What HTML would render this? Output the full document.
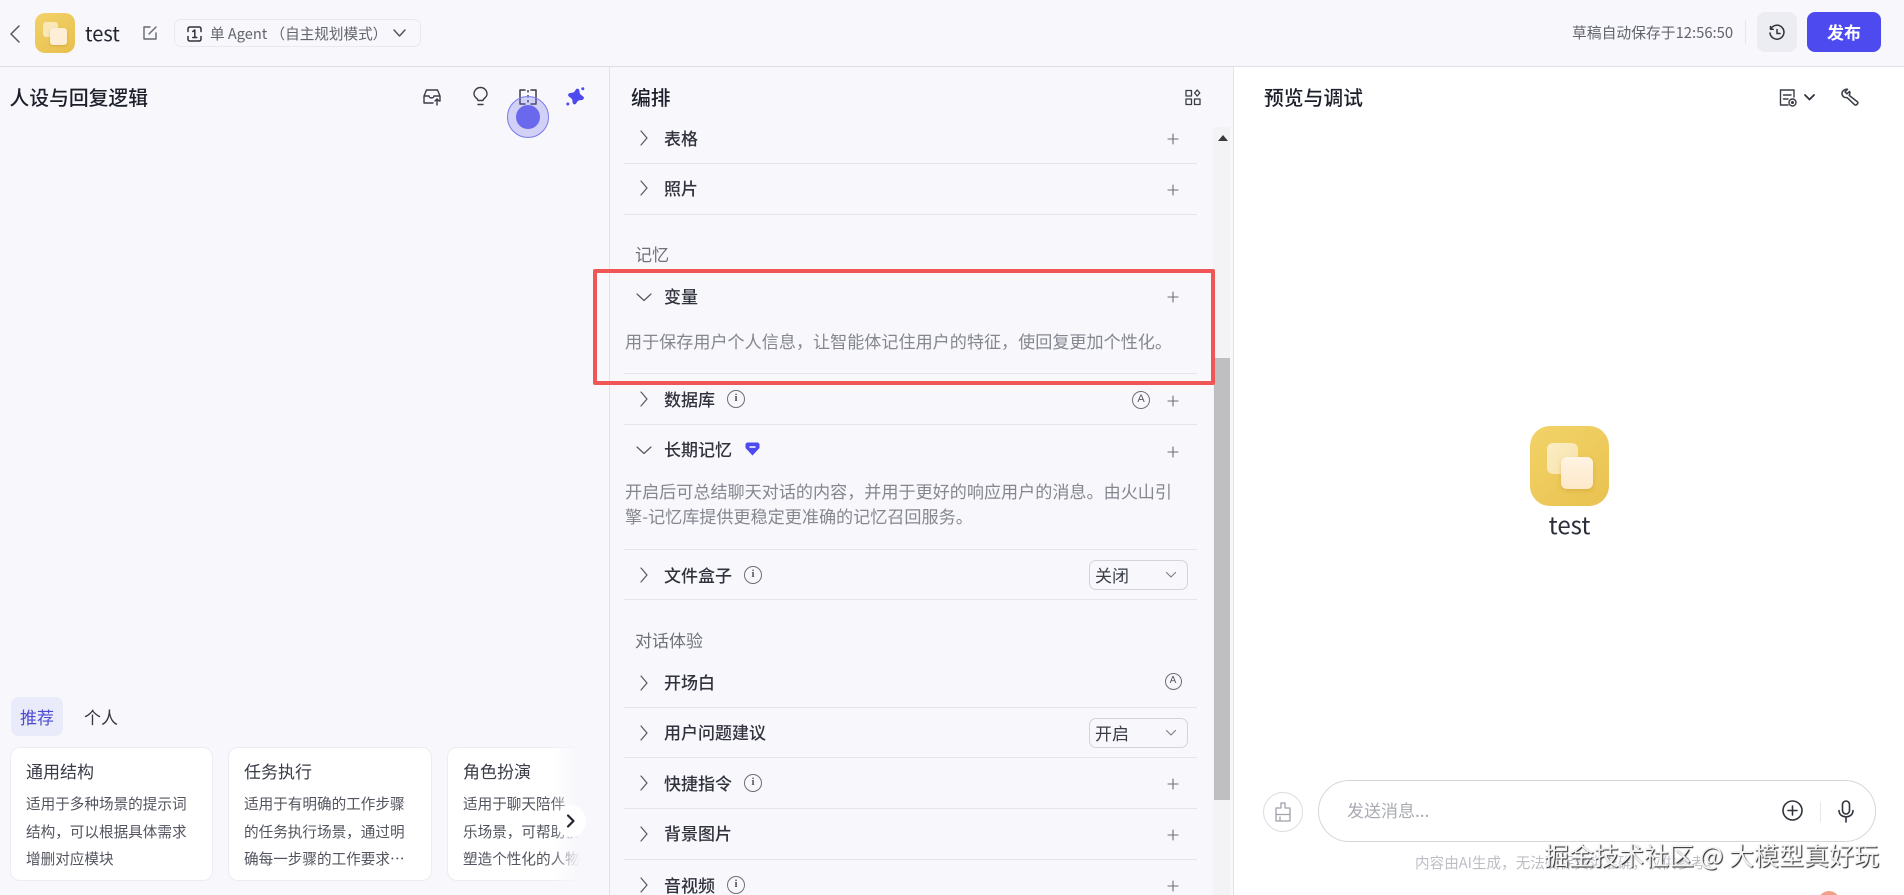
<!DOCTYPE html>
<html lang="zh-CN"><head><meta charset="utf-8"><title>test</title>
<style>
html,body{margin:0;padding:0;width:1904px;height:895px;overflow:hidden;background:#f7f7fc}
*{box-sizing:border-box}
body{position:relative;font-family:"Noto Sans CJK SC","Liberation Sans",sans-serif;color:#1f2333}
.a{position:absolute;white-space:nowrap}
svg{position:absolute;overflow:visible;fill:none;stroke:#3a3c46;stroke-width:1.5;stroke-linecap:round;stroke-linejoin:round}
.l{position:absolute;left:624px;width:573px;height:1px;background:#e4e5ea}
.t{position:absolute;left:664px;height:24px;line-height:24px;font-size:17px;color:#30323c;font-weight:500;white-space:nowrap}
.h{position:absolute;height:28px;line-height:28px;font-size:19.8px;font-weight:500;color:#1c1f2a;white-space:nowrap}
.d{position:absolute;left:625px;height:25px;line-height:25px;font-size:17.1px;color:#85878f;white-space:nowrap}
.s{position:absolute;left:635px;height:24px;line-height:24px;font-size:17px;color:#6f7179;white-space:nowrap}
.sel{position:absolute;left:1089px;width:99px;height:30px;border:1px solid #d3d4da;border-radius:7px;font-size:17px;line-height:28px;padding-left:5px;color:#3a3c46}
.card{position:absolute;top:747px;height:134px;background:#fff;border:1px solid #ececf2;border-radius:10px;overflow:hidden}
.card b{position:absolute;left:15px;top:10.500px;font-size:17px;line-height:24px;font-weight:400;color:#3a3c46;white-space:nowrap}
.card p{position:absolute;left:15px;top:42px;margin:0;font-size:14.6px;line-height:27.5px;color:#52545e;white-space:nowrap}
.i{position:absolute;width:18px;height:18px;border:1.300px solid #6d6f77;border-radius:50%;font:700 11px/15px 'Liberation Serif',serif;text-align:center;color:#55575f}
</style></head><body>

<!-- header -->
<div class="a" style="left:0;top:66px;width:1904px;height:1px;background:#dfe0e6"></div>
<svg style="left:9px;top:24px" width="12" height="20" viewBox="0 0 12 20"><path d="M10 2 L2 10 L10 18" stroke="#55575f"/></svg>
<div class="a" style="left:35px;top:13px;width:40px;height:40px;border-radius:10px;background:linear-gradient(145deg,#f2d26a,#e8bf4d)">
  <div class="a" style="left:8px;top:9px;width:15px;height:15px;border-radius:3px;background:#f9e7b8"></div>
  <div class="a" style="left:15px;top:15px;width:17px;height:17px;border-radius:3px;background:#fdeed5;box-shadow:0 1px 2px rgba(180,130,30,.4)"></div>
</div>
<div class="a" style="left:85px;top:19px;font-size:20px;line-height:28px;color:#22252f">test</div>
<svg style="left:142px;top:25px" width="16" height="16" viewBox="0 0 16 16"><path d="M8 2 H2 V14 H14 V8" stroke="#66686f" stroke-width="1.4"/><path d="M7 9 L14 2" stroke="#66686f" stroke-width="1.4"/></svg>
<div class="a" style="left:174px;top:19px;width:247px;height:28px;border:1px solid #e9e9f0;border-radius:7px"></div>
<svg style="left:187px;top:26px" width="15" height="16" viewBox="0 0 15 16"><path d="M1 5.500 V3 Q1 1 3 1 H12 Q14 1 14 3 V5.500 M1 10.500 V13 Q1 15 3 15 H12 Q14 15 14 13 V10.500" stroke="#30323c"/><path d="M5.800 5.500 L7.800 4 V11.500 M5.800 11.500 H9.800" stroke="#30323c"/></svg>
<div class="a" style="left:210px;top:23px;font-size:14.6px;line-height:22px;color:#62646d">单 Agent （自主规划模式）</div>
<svg style="left:393px;top:29px" width="13" height="8" viewBox="0 0 13 8"><path d="M1 1 L6.500 7 L12 1" stroke="#55575f"/></svg>

<div class="a" style="left:1572px;top:21px;font-size:14.8px;line-height:24px;color:#62646d">草稿自动保存于12:56:50</div>
<div class="a" style="left:1745px;top:20px;width:1px;height:24px;background:#e6e7ec"></div>
<div class="a" style="left:1757px;top:12px;width:40px;height:40px;border-radius:8px;background:#ecedf2"></div>
<svg style="left:1769px;top:25px" width="16" height="16" viewBox="0 0 16 16"><path d="M2 3.500 A7 7 0 1 1 1 8" stroke="#30323c"/><path d="M1.500 1.500 V4.200 H4.200 M8 4.500 V8.500 H11" stroke="#30323c"/></svg>
<div class="a" style="left:1807px;top:12px;width:74px;height:40px;border-radius:8px;background:#4d4bf0;color:#fff;font-size:17px;font-weight:700;line-height:40px;text-align:center">发布</div>

<!-- left pane -->
<div class="a" style="left:609px;top:67px;width:1px;height:828px;background:#e2e3e9"></div>
<div class="h" style="left:9.500px;top:83px">人设与回复逻辑</div>

<svg style="left:423px;top:88px" width="19" height="18" viewBox="0 0 19 18"><path d="M1 8 L3.500 2 H14.500 L17 8 V13 M1 8 V15 H10 M1 8 H6 C6 10.500 11 10.500 11 8 H17 M14 17 V11 M12 13 L14 11 L16 13" stroke="#3a3c46" stroke-width="1.400"/></svg>
<svg style="left:473px;top:87px" width="15" height="20" viewBox="0 0 15 20"><path d="M5 13.500 C5 11.500 1 10.500 1 7 A6.500 6.500 0 0 1 14 7 C14 10.500 10 11.500 10 13.500 Z M5 17.500 H10" stroke="#3a3c46" stroke-width="1.400"/></svg>
<svg style="left:519px;top:89px" width="18" height="16" viewBox="0 0 18 16"><path d="M6 1 H1 V15 H6 M12 1 H17 V15 H12" stroke="#3a3c46" stroke-width="1.500"/><path d="M9 1 V15" stroke="#3a3c46" stroke-width="1.400" stroke-dasharray="2.500 2.500" stroke-linecap="butt"/></svg>
<svg style="left:566px;top:87px" width="19" height="19" viewBox="0 0 19 19"><path d="M10 3.500 C10.800 7 12 8.200 16 9.500 C12 10.800 10.800 12 10 15.500 C9.200 12 8 10.800 4 9.500 C8 8.200 9.200 7 10 3.500Z" transform="rotate(14 10 9.500)" fill="#4d4bf0" stroke="#4d4bf0" stroke-width="4"/><circle cx="16.800" cy="1.800" r="1.500" fill="#4d4bf0" stroke="none"/><circle cx="1.800" cy="17" r="1.500" fill="#4d4bf0" stroke="none"/></svg>

<div class="a" style="left:507px;top:96px;width:42px;height:42px;border-radius:50%;background:rgba(113,110,236,.28);border:1.500px solid #7d79ee"></div>
<div class="a" style="left:516px;top:105px;width:24px;height:24px;border-radius:50%;background:#6a68ec"></div>

<div class="a" style="left:11px;top:697px;width:52px;height:39px;border-radius:8px;background:#e9eafa"></div>
<div class="a" style="left:20px;top:705px;font-size:17px;line-height:24px;color:#4d4bcf">推荐</div>
<div class="a" style="left:84px;top:705px;font-size:17px;line-height:24px;color:#33353f">个人</div>

<div class="card" style="left:10px;width:203px"><b>通用结构</b><p>适用于多种场景的提示词<br>结构，可以根据具体需求<br>增删对应模块</p></div>
<div class="card" style="left:228px;width:204px"><b>任务执行</b><p>适用于有明确的工作步骤<br>的任务执行场景，通过明<br>确每一步骤的工作要求…</p></div>
<div class="card" style="left:447px;width:133px;border-right:none;border-radius:10px 0 0 10px"><b>角色扮演</b><p>适用于聊天陪伴、互动娱<br>乐场景，可帮助模型轻松<br>塑造个性化的人物角色</p></div>
<div class="a" style="left:552px;top:740px;width:29px;height:150px;background:linear-gradient(90deg,rgba(247,247,252,0),#f7f7fc 95%)"></div>
<div class="a" style="left:556px;top:805px;width:30px;height:32px;border-radius:50%;background:#fff"></div>
<svg style="left:566px;top:814px" width="9" height="14" viewBox="0 0 9 14"><path d="M2 1.500 L7.500 7 L2 12.500" stroke="#23252e" stroke-width="2.200"/></svg>

<!-- middle -->
<div class="h" style="left:631px;top:83px">编排</div>
<svg style="left:1185px;top:89px" width="16" height="17" viewBox="0 0 16 17"><path d="M1 1.500 H6.500 V7 H1Z M1 10 H6.500 V15.500 H1Z M9.500 10 H15 V15.500 H9.500Z" stroke="#3a3c46" stroke-width="1.300"/><path d="M12.200 1 L14.800 4 L12.200 7 L9.600 4Z" stroke="#3a3c46" stroke-width="1.300"/></svg>

<!-- scrollbar -->
<div class="a" style="left:1213px;top:127px;width:17px;height:768px;background:#f3f3f5"></div>
<div class="a" style="left:1218px;top:135px;width:0;height:0;border-left:5px solid transparent;border-right:5px solid transparent;border-bottom:6px solid #3a3a3a"></div>
<div class="a" style="left:1214px;top:358px;width:16px;height:442px;background:#bfbfc1"></div>
<div class="a" style="left:1233px;top:67px;width:1px;height:828px;background:#e2e3e9"></div>

<div class="t" style="top:126px">表格</div><div class="l" style="top:163px"></div>
<div class="t" style="top:176px">照片</div><div class="l" style="top:214px"></div>
<div class="s" style="top:242px">记忆</div>
<div class="t" style="top:284px">变量</div>
<div class="d" style="top:328px">用于保存用户个人信息，让智能体记住用户的特征，使回复更加个性化。</div>
<div class="l" style="top:373px"></div>
<div class="t" style="top:387px">数据库</div><div class="l" style="top:424px"></div>
<div class="t" style="top:437px">长期记忆</div>
<div class="d" style="top:478px">开启后可总结聊天对话的内容，并用于更好的响应用户的消息。由火山引</div>
<div class="d" style="top:503px">擎-记忆库提供更稳定更准确的记忆召回服务。</div>
<div class="l" style="top:549px"></div>
<div class="t" style="top:563px">文件盒子</div><div class="l" style="top:599px"></div>
<div class="s" style="top:628px">对话体验</div>
<div class="t" style="top:670px">开场白</div><div class="l" style="top:707px"></div>
<div class="t" style="top:720px">用户问题建议</div><div class="l" style="top:757px"></div>
<div class="t" style="top:771px">快捷指令</div><div class="l" style="top:808px"></div>
<div class="t" style="top:821px">背景图片</div><div class="l" style="top:859px"></div>
<div class="t" style="top:873px">音视频</div>

<!-- chevrons right -->
<svg style="left:640px;top:130px" width="8" height="16" viewBox="0 0 8 16"><path d="M1 1 L7 8 L1 15" stroke="#55575f" stroke-width="1.200"/></svg>
<svg style="left:640px;top:180px" width="8" height="16" viewBox="0 0 8 16"><path d="M1 1 L7 8 L1 15" stroke="#55575f" stroke-width="1.200"/></svg>
<svg style="left:640px;top:391px" width="8" height="16" viewBox="0 0 8 16"><path d="M1 1 L7 8 L1 15" stroke="#55575f" stroke-width="1.200"/></svg>
<svg style="left:640px;top:567px" width="8" height="16" viewBox="0 0 8 16"><path d="M1 1 L7 8 L1 15" stroke="#55575f" stroke-width="1.200"/></svg>
<svg style="left:640px;top:675px" width="8" height="16" viewBox="0 0 8 16"><path d="M1 1 L7 8 L1 15" stroke="#55575f" stroke-width="1.200"/></svg>
<svg style="left:640px;top:725px" width="8" height="16" viewBox="0 0 8 16"><path d="M1 1 L7 8 L1 15" stroke="#55575f" stroke-width="1.200"/></svg>
<svg style="left:640px;top:775px" width="8" height="16" viewBox="0 0 8 16"><path d="M1 1 L7 8 L1 15" stroke="#55575f" stroke-width="1.200"/></svg>
<svg style="left:640px;top:826px" width="8" height="16" viewBox="0 0 8 16"><path d="M1 1 L7 8 L1 15" stroke="#55575f" stroke-width="1.200"/></svg>
<svg style="left:640px;top:877px" width="8" height="16" viewBox="0 0 8 16"><path d="M1 1 L7 8 L1 15" stroke="#55575f" stroke-width="1.200"/></svg>
<!-- chevrons down -->
<svg style="left:636px;top:293px" width="16" height="8" viewBox="0 0 16 8"><path d="M1 1 L8 7.500 L15 1" stroke="#55575f" stroke-width="1.200"/></svg>
<svg style="left:636px;top:446px" width="16" height="8" viewBox="0 0 16 8"><path d="M1 1 L8 7.500 L15 1" stroke="#55575f" stroke-width="1.200"/></svg>

<!-- plus -->
<svg style="left:1168px;top:134px" width="10" height="10" viewBox="0 0 10 10"><path d="M5 0 V10 M0 5 H10" stroke="#6d6f77" stroke-width="1.100"/></svg>
<svg style="left:1168px;top:185px" width="10" height="10" viewBox="0 0 10 10"><path d="M5 0 V10 M0 5 H10" stroke="#6d6f77" stroke-width="1.100"/></svg>
<svg style="left:1168px;top:292px" width="10" height="10" viewBox="0 0 10 10"><path d="M5 0 V10 M0 5 H10" stroke="#6d6f77" stroke-width="1.100"/></svg>
<svg style="left:1168px;top:396px" width="10" height="10" viewBox="0 0 10 10"><path d="M5 0 V10 M0 5 H10" stroke="#6d6f77" stroke-width="1.100"/></svg>
<svg style="left:1168px;top:447px" width="10" height="10" viewBox="0 0 10 10"><path d="M5 0 V10 M0 5 H10" stroke="#6d6f77" stroke-width="1.100"/></svg>
<svg style="left:1168px;top:779px" width="10" height="10" viewBox="0 0 10 10"><path d="M5 0 V10 M0 5 H10" stroke="#6d6f77" stroke-width="1.100"/></svg>
<svg style="left:1168px;top:830px" width="10" height="10" viewBox="0 0 10 10"><path d="M5 0 V10 M0 5 H10" stroke="#6d6f77" stroke-width="1.100"/></svg>
<svg style="left:1168px;top:881px" width="10" height="10" viewBox="0 0 10 10"><path d="M5 0 V10 M0 5 H10" stroke="#6d6f77" stroke-width="1.100"/></svg>

<!-- info icons -->
<div class="i" style="left:727px;top:390px">i</div>
<div class="i" style="left:744px;top:566px">i</div>
<div class="i" style="left:744px;top:774px">i</div>
<div class="i" style="left:727px;top:876px">i</div>
<!-- A icons -->
<div class="a" style="left:1132px;top:391px;width:18px;height:18px;border:1.300px solid #6d6f77;border-radius:50%;font:400 11px/15px 'Liberation Sans',sans-serif;text-align:center;color:#55575f">A</div>
<div class="a" style="left:1164.500px;top:673px;width:17px;height:17px;border:1.300px solid #6d6f77;border-radius:50%;font:400 10px/14px 'Liberation Sans',sans-serif;text-align:center;color:#55575f">A</div>
<!-- diamond -->
<svg style="left:745px;top:442px" width="15" height="14" viewBox="0 0 15 14"><path d="M2 0.500 H13 L14.500 2 V6 L7.500 13.500 L.5 6 V2Z" fill="#4d4bf0" stroke="none"/><path d="M5 5 H10" stroke="#fff" stroke-width="1.400"/></svg>

<div class="sel" style="top:560px">关闭</div>
<svg style="left:1166px;top:572px" width="10" height="6" viewBox="0 0 10 6"><path d="M.5 .5 L5 5 L9.500 .5" stroke="#7a7c84" stroke-width="1.100"/></svg>
<div class="sel" style="top:718px">开启</div>
<svg style="left:1166px;top:730px" width="10" height="6" viewBox="0 0 10 6"><path d="M.5 .5 L5 5 L9.500 .5" stroke="#7a7c84" stroke-width="1.100"/></svg>

<!-- red box -->
<div class="a" style="left:593px;top:269px;width:622px;height:116px;border:4.500px solid #f05656;border-radius:2px"></div>

<!-- right pane -->
<div class="a" style="left:1234px;top:67px;width:670px;height:828px;background:#fff"></div>
<div class="h" style="left:1264px;top:83px">预览与调试</div>
<svg style="left:1779px;top:89px" width="18" height="18" viewBox="0 0 18 18"><path d="M9 16 H1.500 V1 H15 V8 M4.500 6 H12 M4.500 10 H9" stroke="#3a3c46" stroke-width="1.400"/><circle cx="13.500" cy="13.500" r="3.500" stroke="#3a3c46" stroke-width="1.400"/><circle cx="13.500" cy="13.500" r=".8" fill="#3a3c46" stroke="#3a3c46"/></svg>
<svg style="left:1804px;top:94px" width="11" height="7" viewBox="0 0 11 7"><path d="M1 1 L5.500 5.500 L10 1" stroke="#30323c" stroke-width="1.800"/></svg>
<svg style="left:1841px;top:88px" width="18" height="18" viewBox="0 0 18 18"><path d="M6.500 1.200 L4 3.800 L6 5.800 L8.600 3.400 C9.200 5.200 8.800 6.300 8.200 7.400 L16.600 14 C17.800 15.200 15 18 13.600 16.700 L6 9.600 C3 10 .8 7.800 1 5.200 C1.200 3 3.500 1 6.500 1.200Z" stroke="#3a3c46" stroke-width="1.500"/></svg>

<div class="a" style="left:1530px;top:426px;width:79px;height:80px;border-radius:20px;background:linear-gradient(145deg,#f2d368,#e9c250)">
  <div class="a" style="left:17px;top:17px;width:31px;height:31px;border-radius:6px;background:linear-gradient(135deg,#faedc6,#f7e2a8)"></div>
  <div class="a" style="left:31px;top:31px;width:32px;height:32px;border-radius:6px;background:linear-gradient(180deg,#fff3e2,#fde9c9);box-shadow:0 2px 4px rgba(190,140,30,.35)"></div>
</div>
<div class="a" style="left:1530px;top:506.500px;width:79px;text-align:center;font-size:24px;line-height:34px;color:#2b2e3a">test</div>

<div class="a" style="left:1263px;top:792px;width:40px;height:40px;border:1px solid #dcdde2;border-radius:50%"></div>
<svg style="left:1275px;top:802px" width="16" height="20" viewBox="0 0 16 20"><path d="M6 6 V1 H10 V6 H15 V19 H1 V6Z M1 12.500 H15 M5 19 V15" stroke="#9fa1a9" stroke-width="1.300"/></svg>
<div class="a" style="left:1318px;top:780px;width:558px;height:62px;border:1px solid #d5d6db;border-radius:31px;background:#fff"></div>
<div class="a" style="left:1347px;top:797px;font-size:17px;line-height:26px;color:#a9abb3">发送消息...</div>
<svg style="left:1782px;top:800px" width="21" height="21" viewBox="0 0 21 21"><circle cx="10.500" cy="10.500" r="9.500" stroke="#30323c" stroke-width="1.600"/><path d="M10.500 6 V15 M6 10.500 H15" stroke="#30323c" stroke-width="1.600"/></svg>
<div class="a" style="left:1820px;top:802px;width:1px;height:20px;background:#e6e7ec"></div>
<svg style="left:1838px;top:800px" width="16" height="23" viewBox="0 0 16 23"><rect x="4.500" y="1" width="7" height="13" rx="3.500" stroke="#30323c" stroke-width="1.600"/><path d="M1 10.500 C1 19 15 19 15 10.500 M8 17 V22" stroke="#30323c" stroke-width="1.600"/></svg>
<div class="a" style="left:1415px;top:852px;font-size:14.600px;line-height:22px;color:#bcbec4">内容由AI生成，无法确保真实准确，仅供参考。</div>
<div class="a" style="left:1544px;top:837px;font-size:25px;line-height:36px;color:#f2f2f2;text-shadow:1px 1px 1px #222,-1px 0 0 rgba(255,255,255,.8)">掘金技术社区 @ 大模型真好玩</div>
<div class="a" style="left:1818px;top:891px;width:22px;height:22px;border-radius:50%;background:#f4a088"></div>
</body></html>
